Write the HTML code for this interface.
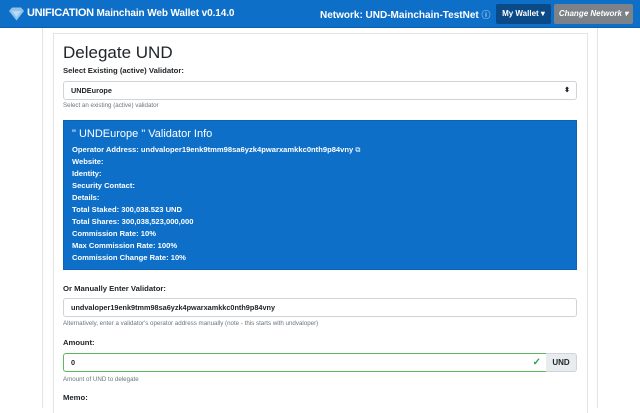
<!DOCTYPE html>
<html><head><style>
*{box-sizing:border-box;margin:0;padding:0}
body{width:640px;height:400px;overflow:hidden;background:#fff;font-family:"Liberation Sans",Arial,sans-serif;color:#212529;position:relative}
div{white-space:nowrap}
.hdr{position:absolute;left:0;top:0;width:640px;height:28px;background:#0d6fc8;border-bottom:1px solid #0b5fae}
.brand{position:absolute;left:27px;top:7px;color:#fff;font-weight:bold;font-size:11px;letter-spacing:-0.3px}
.brand .sm{font-size:10px;letter-spacing:-0.1px}
.net{position:absolute;left:320px;top:8px;color:#fff;font-weight:bold;font-size:10px}
.btn{position:absolute;top:4px;height:20px;color:#fff;font-weight:bold;font-size:8px;line-height:20px;padding:0;text-align:center;border-radius:2px}
.outer{position:absolute;left:42px;top:28px;width:556px;height:380px;border-left:1px solid #e4e4e4;border-right:1px solid #e4e4e4}
.card{position:absolute;left:53px;top:33px;width:535px;height:380px;border:1px solid #e4e4e4;border-bottom:none}
.abs{position:absolute}
h1{position:absolute;left:63px;top:43px;font-size:17px;font-weight:normal}
.lbl{position:absolute;left:63px;font-size:7.7px;font-weight:bold}
.help{position:absolute;left:63px;font-size:6.2px;color:#6c757d}
.inp{position:absolute;left:63px;width:514px;height:19px;border:1px solid #ced4da;border-radius:3px;font-size:7.3px;padding-left:7px;line-height:17px;font-weight:bold}
.info{position:absolute;left:63px;top:120px;width:514px;height:150px;background:#0d6fc8;border:1px solid #0b63b5;color:#fff;padding:0 8px}
.info .t{position:absolute;left:8px;top:7px;font-size:11px}
.info .r{position:absolute;left:8px;font-size:7.6px;font-weight:bold}
</style></head><body>
<div class="hdr">
<svg class="abs" style="left:8px;top:7px" width="17" height="14" viewBox="0 0 17 14"><path d="M1 4 L4 0.5 H13 L16 4 L8.5 13.5 Z" fill="#8fc3ea"/><path d="M4 4 H13 L8.5 10 Z" fill="#b7daf4"/></svg>
<div class="brand">UNIFICATION <span class="sm">Mainchain Web Wallet v0.14.0</span></div>
<div class="net">Network: UND-Mainchain-TestNet <span style="font-weight:normal;font-size:9px">ⓘ</span></div>
<div class="btn" style="left:496px;width:55px;background:#0a4a86">My Wallet ▾</div>
<div class="btn" style="left:554px;width:79px;background:#7c8287;font-style:italic">Change Network ▾</div>
</div>
<div class="outer"></div>
<div class="card"></div>
<h1>Delegate UND</h1>
<div class="lbl" style="top:66px">Select Existing (active) Validator:</div>
<div class="inp" style="top:81px">UNDEurope<span style="position:absolute;right:6px;font-size:7px">⬍</span></div>
<div class="help" style="top:102px">Select an existing (active) validator</div>
<div class="info">
<div class="t">" UNDEurope " Validator Info</div>
<div class="r" style="top:24px">Operator Address: undvaloper19enk9tmm98sa6yzk4pwarxamkkc0nth9p84vny <span style="font-weight:normal;font-size:7px">⧉</span></div>
<div class="r" style="top:36px">Website:</div>
<div class="r" style="top:48px">Identity:</div>
<div class="r" style="top:60px">Security Contact:</div>
<div class="r" style="top:72px">Details:</div>
<div class="r" style="top:84px">Total Staked: 300,038.523 UND</div>
<div class="r" style="top:96px">Total Shares: 300,038,523,000,000</div>
<div class="r" style="top:108px">Commission Rate: 10%</div>
<div class="r" style="top:120px">Max Commission Rate: 100%</div>
<div class="r" style="top:132px">Commission Change Rate: 10%</div>
</div>
<div class="lbl" style="top:284px">Or Manually Enter Validator:</div>
<div class="inp" style="top:298px">undvaloper19enk9tmm98sa6yzk4pwarxamkkc0nth9p84vny</div>
<div class="help" style="top:320px">Alternatively, enter a validator's operator address manually (note - this starts with undvaloper)</div>
<div class="lbl" style="top:338px">Amount:</div>
<div class="inp" style="top:353px;width:484px;border-color:#5cb85c;border-radius:3px 0 0 3px">0<span style="position:absolute;right:5px;color:#28a745;font-size:10px">✓</span></div>
<div class="abs" style="left:546px;top:353px;width:31px;height:19px;background:#e9ecef;border:1px solid #ced4da;border-left:none;border-radius:0 3px 3px 0;font-size:8px;font-weight:bold;text-align:center;line-height:17px">UND</div>
<div class="help" style="top:376px">Amount of UND to delegate</div>
<div class="lbl" style="top:393px">Memo:</div>
</body></html>
